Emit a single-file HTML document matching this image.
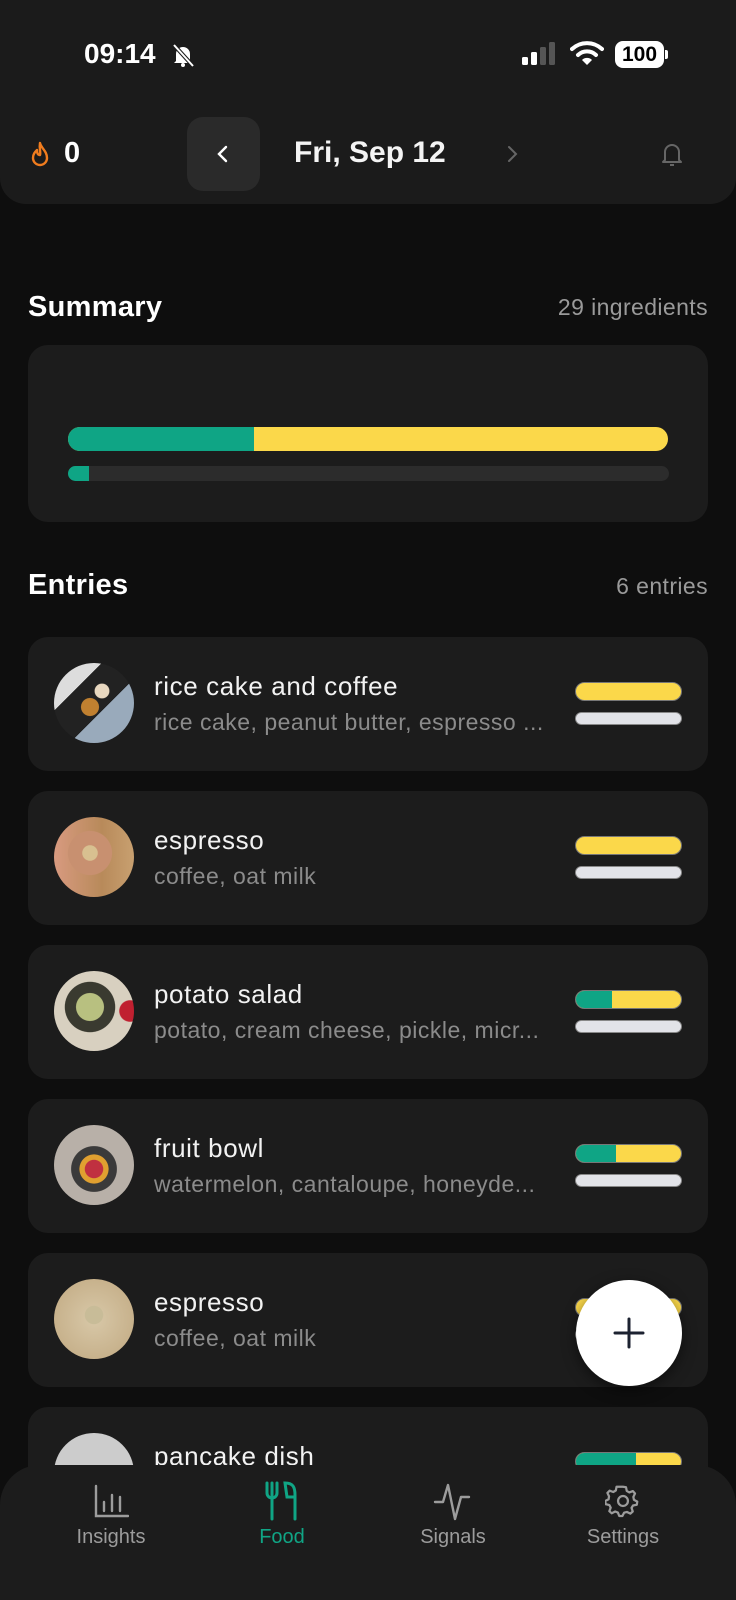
<!DOCTYPE html>
<html><head><meta charset="utf-8"><style>
*{box-sizing:border-box;margin:0;padding:0}
body{width:736px;height:1600px;background:#0e0e0e;font-family:"Liberation Sans",sans-serif;color:#fff;position:relative;overflow:hidden}
.abs{position:absolute}
.hdr{left:0;top:0;width:736px;height:204px;background:#1b1b1b;border-radius:0 0 26px 26px}
.card{left:28px;width:680px;height:134px;background:#1c1c1c;border-radius:20px}
.av{left:26px;top:26px;width:80px;height:80px;border-radius:50%}
.t{left:126px;top:34px;font-size:26px;color:#f2f2f2;white-space:nowrap;letter-spacing:.6px}
.s{left:126px;top:72px;font-size:23px;color:#8b8b8b;white-space:nowrap;width:440px;overflow:hidden;letter-spacing:.5px}
.b1{left:547px;top:45px;width:107px;height:19px;border-radius:10px;background:#fbd84a;overflow:hidden;border:1px solid #777}
.b2{left:547px;top:75px;width:107px;height:13px;border-radius:7px;background:#e2e3e8;border:1px solid #888}
.g{height:100%;background:#0fa585}
.nav{left:0;top:1465px;width:736px;height:135px;background:#1c1c1c;border-radius:40px 40px 0 0}
.lbl{font-size:20px;color:#9c9c9c;text-align:center;width:140px;top:61px}
</style></head><body>
<div class="abs hdr"></div>
<div class="abs" style="left:84px;top:38px;font-size:28px;font-weight:bold">09:14</div>
<svg class="abs" style="left:170px;top:42px" width="26" height="26" viewBox="0 0 26 26"><path d="M6 19V12a7 7 0 0 1 14 0v7l2 2H4z" fill="#fff"/><circle cx="13" cy="23" r="2" fill="#fff"/><path d="M4 3l19 21" stroke="#1b1b1b" stroke-width="4"/><path d="M4 3l19 21" stroke="#fff" stroke-width="2"/></svg>
<svg class="abs" style="left:520px;top:42px" width="40" height="24"><rect x="2" y="15" width="6" height="8" rx="1.5" fill="#fff"/><rect x="11" y="10" width="6" height="13" rx="1.5" fill="#fff"/><rect x="20" y="5" width="6" height="18" rx="1.5" fill="#555"/><rect x="29" y="0" width="6" height="23" rx="1.5" fill="#555"/></svg>
<svg class="abs" style="left:570px;top:40px" width="34" height="26" viewBox="0 0 34 26"><path d="M2 9a22 22 0 0 1 30 0" stroke="#fff" stroke-width="4" fill="none" stroke-linecap="round"/><path d="M8 15a13 13 0 0 1 18 0" stroke="#fff" stroke-width="4" fill="none" stroke-linecap="round"/><path d="M17 25l-5-5a7 7 0 0 1 10 0z" fill="#fff"/></svg>
<div class="abs" style="left:615px;top:41px;width:49px;height:27px;background:#fff;border-radius:8px;color:#000;font-weight:bold;font-size:21px;text-align:center;line-height:27px">100</div>
<div class="abs" style="left:665px;top:50px;width:3px;height:9px;background:#fff;border-radius:0 2px 2px 0"></div>
<svg class="abs" style="left:28px;top:140px" width="24" height="28" viewBox="0 0 24 28"><path d="M12 3c1 5 7 8 7 15a7 7 0 0 1-14 0c0-4 2-6 4-8 0 3 1 5 3 5 1-3-1-6 0-12z" fill="none" stroke="#f07c1e" stroke-width="2.4" stroke-linejoin="round"/></svg>
<div class="abs" style="left:64px;top:137px;font-size:29px;font-weight:bold">0</div>
<div class="abs" style="left:187px;top:117px;width:73px;height:74px;background:#2a2a2a;border-radius:16px"></div>
<svg class="abs" style="left:214px;top:144px" width="18" height="20"><path d="M12 3L5 10l7 7" stroke="#fff" stroke-width="2.4" fill="none" stroke-linecap="round"/></svg>
<div class="abs" style="left:294px;top:136px;font-size:30px;font-weight:bold;color:#f4f4f4">Fri, Sep 12</div>
<svg class="abs" style="left:503px;top:144px" width="18" height="20"><path d="M6 3l7 7-7 7" stroke="#666" stroke-width="2" fill="none" stroke-linecap="round"/></svg>
<svg class="abs" style="left:660px;top:140px" width="24" height="28" viewBox="0 0 24 28"><path d="M5 20V12a7 7 0 0 1 14 0v8l2 2H3z" stroke="#666" stroke-width="2" fill="none" stroke-linejoin="round"/><path d="M10 25h4" stroke="#666" stroke-width="2"/></svg>

<div class="abs" style="left:28px;top:291px;font-size:29px;font-weight:bold;letter-spacing:.3px">Summary</div>
<div class="abs" style="right:28px;top:294px;font-size:23px;color:#9a9a9a;letter-spacing:.4px">29 ingredients</div>
<div class="abs" style="left:28px;top:345px;width:680px;height:177px;background:#1c1c1c;border-radius:20px"></div>
<div class="abs" style="left:68px;top:427px;width:600px;height:24px;background:#fbd84a;border-radius:12px;overflow:hidden"><div class="g" style="width:186px"></div></div>
<div class="abs" style="left:68px;top:466px;width:601px;height:15px;background:#2c2c2c;border-radius:8px;overflow:hidden"><div class="g" style="width:21px"></div></div>

<div class="abs" style="left:28px;top:569px;font-size:29px;font-weight:bold;letter-spacing:.3px">Entries</div>
<div class="abs" style="right:28px;top:573px;font-size:23px;color:#9a9a9a;letter-spacing:.4px">6 entries</div>

<div class="abs card" style="top:637px"><div class="abs av" style="background:radial-gradient(circle at 45% 55%,#c08030 0 14%,transparent 15%),radial-gradient(circle at 60% 35%,#e8d8c0 0 10%,transparent 11%),linear-gradient(135deg,#ddd 0 30%,#222 30% 60%,#9ab 60%)"></div><div class="abs t">rice cake and coffee</div><div class="abs s">rice cake, peanut butter, espresso ...</div><div class="abs b1"></div><div class="abs b2"></div></div>
<div class="abs card" style="top:791px"><div class="abs av" style="background:radial-gradient(circle at 45% 45%,#d8c090 0 12%,#c89070 13% 35%,transparent 36%),linear-gradient(90deg,#d89a80,#b88a5a 60%,#c8a070)"></div><div class="abs t">espresso</div><div class="abs s">coffee, oat milk</div><div class="abs b1"></div><div class="abs b2"></div></div>
<div class="abs card" style="top:945px"><div class="abs av" style="background:radial-gradient(circle at 45% 45%,#b8c080 0 22%,#3a3a30 23% 40%,transparent 41%),radial-gradient(circle at 95% 50%,#c02030 0 12%,transparent 13%),#d8d0c0"></div><div class="abs t">potato salad</div><div class="abs s">potato, cream cheese, pickle, micr...</div><div class="abs b1"><div class="g" style="width:36px"></div></div><div class="abs b2"></div></div>
<div class="abs card" style="top:1099px"><div class="abs av" style="background:radial-gradient(circle at 50% 55%,#c03040 0 15%,#e0a030 16% 24%,#3a3a3a 25% 38%,transparent 39%),#b8b0a8"></div><div class="abs t">fruit bowl</div><div class="abs s">watermelon, cantaloupe, honeyde...</div><div class="abs b1"><div class="g" style="width:40px"></div></div><div class="abs b2"></div></div>
<div class="abs card" style="top:1253px"><div class="abs av" style="background:radial-gradient(circle at 50% 45%,#c8bc98 0 15%,transparent 16%),radial-gradient(circle,#d8c8a8,#c0a880)"></div><div class="abs t">espresso</div><div class="abs s">coffee, oat milk</div><div class="abs b1"></div><div class="abs b2"></div></div>
<div class="abs card" style="top:1407px"><div class="abs av" style="background:radial-gradient(circle at 50% 60%,#6a4a30 0 25%,#ccc 26%)"></div><div class="abs t">pancake dish</div><div class="abs b1"><div class="g" style="width:60px"></div></div></div>

<div class="abs" style="left:576px;top:1280px;width:106px;height:106px;border-radius:50%;background:#fff;box-shadow:0 4px 14px rgba(0,0,0,.5)"></div>
<svg class="abs" style="left:612px;top:1316px" width="34" height="34"><path d="M17 3v28M3 17h28" stroke="#1c2230" stroke-width="3" stroke-linecap="round"/></svg>

<div class="abs nav">
<svg class="abs" style="left:93px;top:18px" width="36" height="38" viewBox="0 0 36 38"><path d="M3 3v30h32M11 28v-9M19 28V12M27 28v-14" stroke="#9c9c9c" stroke-width="2.4" fill="none" stroke-linecap="round"/></svg>
<div class="abs lbl" style="left:41px">Insights</div>
<svg class="abs" style="left:263px;top:16px" width="38" height="40" viewBox="0 0 38 40"><path d="M4 2v10a5 5 0 0 0 10 0V2M9 2v36M22 2c8 0 10 4 10 12v2h-8zM32 14v24" stroke="#10a585" stroke-width="3" fill="none" stroke-linecap="round"/></svg>
<div class="abs lbl" style="left:212px;color:#10a585">Food</div>
<svg class="abs" style="left:433px;top:18px" width="38" height="38" viewBox="0 0 38 38"><path d="M2 19h8l5-17 7 34 6-22h8" stroke="#9c9c9c" stroke-width="2.4" fill="none" stroke-linejoin="round" stroke-linecap="round"/></svg>
<div class="abs lbl" style="left:383px">Signals</div>
<svg class="abs" style="left:605px;top:18px" width="36" height="36" viewBox="0 0 24 24"><path d="M12 2.5l2 .3.5 2.5 1.7 1 2.4-.9 1.4 1.6-1.1 2.3.4 1.9 2.2 1.2-.3 2.1-2.5.5-1 1.6.8 2.4-1.6 1.4-2.3-1.1-1.9.5-1.1 2.2h-2.1l-.9-2.3-1.8-.7-2.3 1.2-1.6-1.4.9-2.4-.9-1.7-2.5-.6-.2-2.1 2.2-1.2.3-1.9-1.1-2.3 1.5-1.5 2.4.9 1.7-1 .5-2.5z" stroke="#9c9c9c" stroke-width="1.5" fill="none" stroke-linejoin="round"/><circle cx="12" cy="12" r="3.3" stroke="#9c9c9c" stroke-width="1.5" fill="none"/></svg>
<div class="abs lbl" style="left:553px">Settings</div>
</div>
</body></html>
